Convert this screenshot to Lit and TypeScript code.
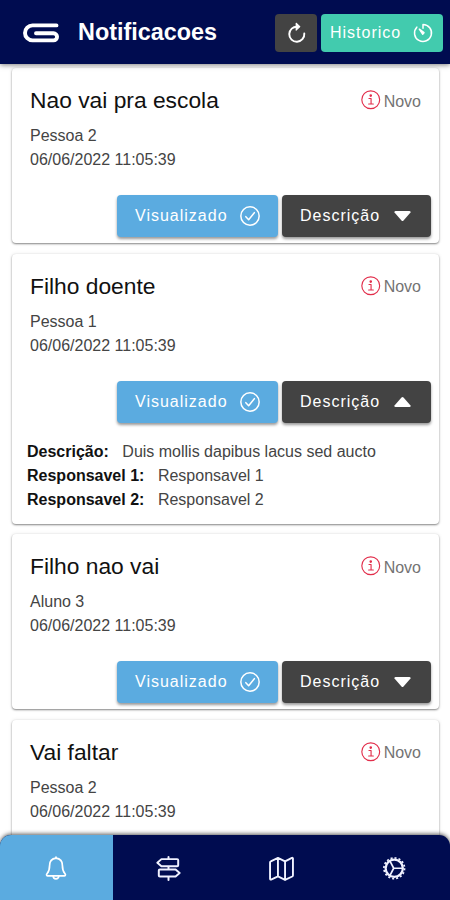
import { LitElement, html, svg, css, nothing } from "lit";
import { customElement } from "lit/decorators.js";

interface Notice {
  title: string;
  person: string;
  details?: [string, string][];
}

const DATE = "06/06/2022 11:05:39";

const NOTICES: Notice[] = [
  { title: "Nao vai pra escola", person: "Pessoa 2" },
  {
    title: "Filho doente",
    person: "Pessoa 1",
    details: [
      ["Descrição:", "Duis mollis dapibus lacus sed aucto"],
      ["Responsavel 1:", "Responsavel 1"],
      ["Responsavel 2:", "Responsavel 2"],
    ],
  },
  { title: "Filho nao vai", person: "Aluno 3" },
  { title: "Vai faltar", person: "Pessoa 2" },
];

const icon = (size: number, body: unknown, width = 1.5) => html`<svg
  class="icon" width=${size} height=${size} viewBox="0 0 24 24" fill="none"
  stroke="currentColor" stroke-width=${width} stroke-linecap="round" stroke-linejoin="round"
>${body}</svg>`;

const refresh = svg`<path d="M13 5.4A8.600 8.600 0 1 0 20.900 13.200"/><path d="M11.600 1.400l4.200 4L11.600 9.400z" fill="currentColor" stroke-width="1.200"/>`;
const timer = svg`<path d="M12 6.2V1.8A10.2 10.2 0 1 1 4.6 5"/><path d="M7.6 7.4l5.6 4.2-1.6 1.8z" fill="currentColor"/>`;
const check = svg`<circle cx="12" cy="12" r="11"/><path d="M7 12.8l3.4 3.6L17.2 8"/>`;
const info = svg`<circle cx="12" cy="12" r="11"/><path d="M9.8 10.4H12.4V17M9.4 17.2H15.2"/><circle cx="12" cy="6.9" r=".9" fill="currentColor"/>`;
const bell = svg`<path d="M12 2.2c-4.4.6-6.400 3.8-6.400 7.2 0 5.400-1.400 6.800-2.600 8.200-.9 1-.3 2.200.8 2.200h16.400c1.100 0 1.700-1.200.8-2.200C19.800 16.200 18.400 14.800 18.400 9.400c0-3.400-2-6.600-6.400-7.200z"/><path d="M9.200 20c0 3.800 5.600 3.800 5.600 0M12 1v1"/>`;
const signs = svg`<path d="M5.200 3H20.300a1 1 0 0 1 1 1v4.800a1 1 0 0 1-1 1H5.200L1.300 6.400zM18.800 13H3.700a1 1 0 0 0-1 1v4.600a1 1 0 0 0 1 1H18.800l3.900-3.300zM12 1v2M12 9.800V13M12 19.600V23"/>`;
const map = svg`<path d="M8.600 1.800l6.800 3.400L22 1.800c.6-.2 1 .1 1 .7v16c0 .5-.2.9-.7 1.200l-6.900 3.300-6.800-3.400L2 22.600c-.6.200-1-.1-1-.7V6.200c0-.5.2-.9.7-1.100zM8.600 1.800v17.800M15.400 5.200V23"/>`;
const gear = svg`<circle cx="12" cy="12" r="9.200" stroke-width="2.400"/><circle cx="12" cy="12" r="11" stroke-width="1.800" stroke-dasharray="2.200 2.120" stroke-linecap="butt"/><path d="M11.400 12H20.500M11.400 12L7.600 4.700M11.400 12L7.600 19.300" stroke-width="1.800"/>`;

@customElement("app-root")
export class AppRoot extends LitElement {
  static styles = css`
    :host {
      display: flex;
      flex-direction: column;
      height: 900px;
      overflow: hidden;
      background: #fff;
      color: #222;
      font: 16px/24px "Liberation Sans", Arial, sans-serif;
    }
    * { box-sizing: border-box; }
    .icon { display: block; flex: none; overflow: visible; }
    header {
      flex: none;
      display: flex;
      align-items: center;
      height: 64px;
      padding: 0 7px 0 23px;
      background: #000c50;
      color: #fff;
      box-shadow: 0 1px 5px rgba(0, 0, 0, 0.5);
      z-index: 1;
    }
    .logo { margin-top: 2px; }
    h1 { margin: 0 auto 0 19px; font-size: 23.4px; line-height: 28px; }
    button {
      display: flex;
      align-items: center;
      justify-content: space-between;
      border: 0;
      border-radius: 4px;
      color: #fff;
      font: inherit;
      letter-spacing: 1px;
      height: 42px;
      padding: 0 18px;
      box-shadow: 0 2px 3px rgba(0, 0, 0, 0.4);
    }
    header button { height: 38px; margin-top: 1px; box-shadow: none; }
    .reload { width: 42px; padding: 0; justify-content: center; background: #434343; }
    .history { width: 122px; margin-left: 4px; padding: 0 10px 0 9px; background: #42cbae; }
    main {
      flex: 1;
      min-height: 0;
      overflow: hidden;
      display: flex;
      flex-direction: column;
      gap: 10.500px;
      padding: 4px 11px 0 12px;
    }
    .card {
      flex: none;
      border-radius: 4px;
      padding: 18px 8px 6px 18px;
      background: #fff;
      box-shadow: 0 1px 2px rgba(0, 0, 0, 0.45), 0 0 4px rgba(0, 0, 0, 0.09);
    }
    .top { display: flex; justify-content: space-between; align-items: center; height: 28px; padding-right: 10px; }
    h2 { margin: 0; font-size: 22.800px; font-weight: 400; line-height: 28px; color: #111; }
    .status { display: flex; align-items: center; gap: 3px; color: #737373; padding-top: 3px; }
    .status .icon { color: #e22e4b; margin-top: -3px; }
    .meta { margin-top: 10px; color: #444; }
    .actions { display: flex; justify-content: flex-end; gap: 4px; margin-top: 23px; }
    .seen { width: 161px; background: #5babe0; }
    .more { width: 149px; background: #434343; }
    .more .icon { margin-right: 2px; }
    .details { margin: 17px 0 6px -3px; color: #444; }
    .row { display: flex; gap: 13.500px; }
    .row b { color: #111; }
    nav {
      flex: none;
      display: grid;
      grid-template-columns: repeat(4, 1fr);
      height: 65px;
      border-radius: 11px 11px 0 0;
      overflow: hidden;
      background: #000c50;
      color: #fff;
      box-shadow: 0 -1px 4px rgba(0, 0, 0, 0.65);
      z-index: 1;
    }
    .tab { display: grid; place-items: center; padding-top: 1px; color: #f0f2ff; }
    .tab.active { background: #5babe0; color: #fff; }
  `;

  private card(n: Notice) {
    return html`<section class="card">
      <div class="top">
        <h2>${n.title}</h2>
        <span class="status">${icon(19.5, info, 1.4)}Novo</span>
      </div>
      <div class="meta">
        <div>${n.person}</div>
        <div>${DATE}</div>
      </div>
      <div class="actions">
        <button class="seen">Visualizado ${icon(20, check, 1.8)}</button>
        <button class="more">Descrição
          <svg class="icon" width="17" height="10" viewBox="0 0 17 10" fill="#fff">
            <path d=${n.details ? "M8.500 0Q9 0 9.500.5L16.500 8.500Q17 10 15.500 10H1.500Q0 10 .5 8.500L7.500.5Q8 0 8.500 0z" : "M8.500 10Q9 10 9.500 9.500L16.500 1.500Q17 0 15.500 0H1.500Q0 0 .5 1.500L7.500 9.500Q8 10 8.500 10z"} />
          </svg>
        </button>
      </div>
      ${n.details
        ? html`<div class="details">
            ${n.details.map(([k, v]) => html`<div class="row"><b>${k}</b><span>${v}</span></div>`)}
          </div>`
        : nothing}
    </section>`;
  }

  render() {
    return html`
      <header>
        <svg class="icon logo" width="36" height="20" viewBox="0 0 36 20" fill="none" stroke="#fff" stroke-width="3.900" stroke-linecap="round" stroke-linejoin="round">
          <path d="M33.500 2.400H9.500A7.500 7.500 0 0 0 9.500 17.400H30.500A3.500 3.500 0 0 0 30.500 10.300H13" />
        </svg>
        <h1>Notificacoes</h1>
        <button class="reload">${icon(21, refresh, 2.2)}</button>
        <button class="history">Historico ${icon(20, timer, 1.8)}</button>
      </header>
      <main>${NOTICES.map((n) => this.card(n))}</main>
      <nav>
        <div class="tab active">${icon(24, bell, 1.7)}</div>
        <div class="tab">${icon(25, signs, 1.9)}</div>
        <div class="tab">${icon(25, map, 1.8)}</div>
        <div class="tab">${icon(22.5, gear, 2)}</div>
      </nav>
    `;
  }
}
